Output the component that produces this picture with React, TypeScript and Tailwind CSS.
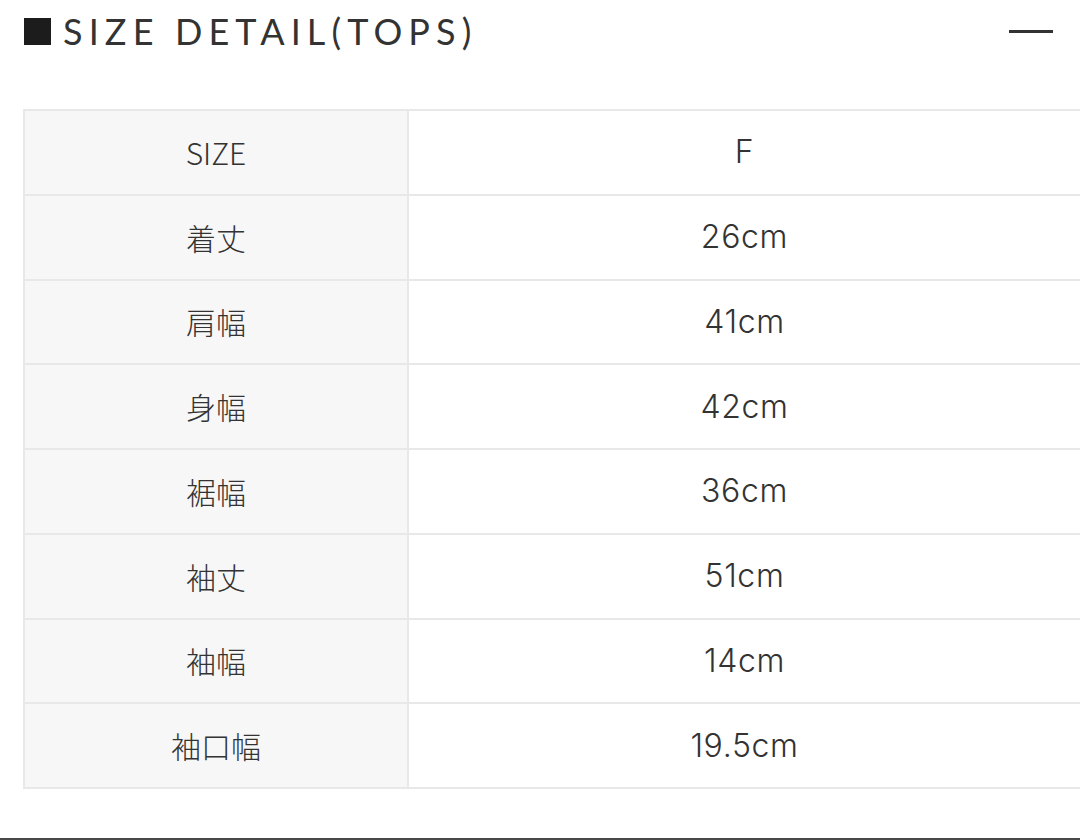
import React from 'react';

const rows: [string, string][] = [
  ['SIZE', 'F'],
  ['着丈', '26cm'],
  ['肩幅', '41cm'],
  ['身幅', '42cm'],
  ['裾幅', '36cm'],
  ['袖丈', '51cm'],
  ['袖幅', '14cm'],
  ['袖口幅', '19.5cm'],
];

const App: React.FC = () => {
  return (
    <div className="h-[840px] w-[1080px] overflow-hidden border-b-2 border-[#4a4a4a] bg-white text-[#333]">
      {/* heading */}
      <div className="flex h-[62px] items-center justify-between pl-[24px] pr-[27px]">
        <div className="flex items-center">
          <div className="h-[27px] w-[27px] bg-[#1c1c1c]" />
          <h2 className="ml-[12px] font-['Lato',sans-serif] text-[36px] font-normal leading-none tracking-[0.17em] text-[#333]">
            SIZE DETAIL(TOPS)
          </h2>
        </div>
        <div className="h-[3px] w-[44px] bg-[#333]" />
      </div>

      {/* table */}
      <div className="ml-[23px] mt-[47px] w-[1060px] border-l-2 border-t-2 border-[#e8e8e8]">
        {rows.map(([label, value]) => (
          <div key={label} className="flex h-[84.75px]">
            <div className="flex w-[384px] items-center justify-center border-b-2 border-r-2 border-[#e8e8e8] bg-[#f7f7f7] font-['Noto_Sans_CJK_JP',sans-serif] text-[30px] font-light text-[#333]">
              {label}
            </div>
            <div className="flex flex-1 items-center justify-center border-b-2 border-r-2 border-[#e8e8e8] bg-white pr-[1px] font-['Inter',sans-serif] text-[32px] font-light tracking-[0.02em] text-[#333]">
              {value}
            </div>
          </div>
        ))}
      </div>
    </div>
  );
};

export default App;
